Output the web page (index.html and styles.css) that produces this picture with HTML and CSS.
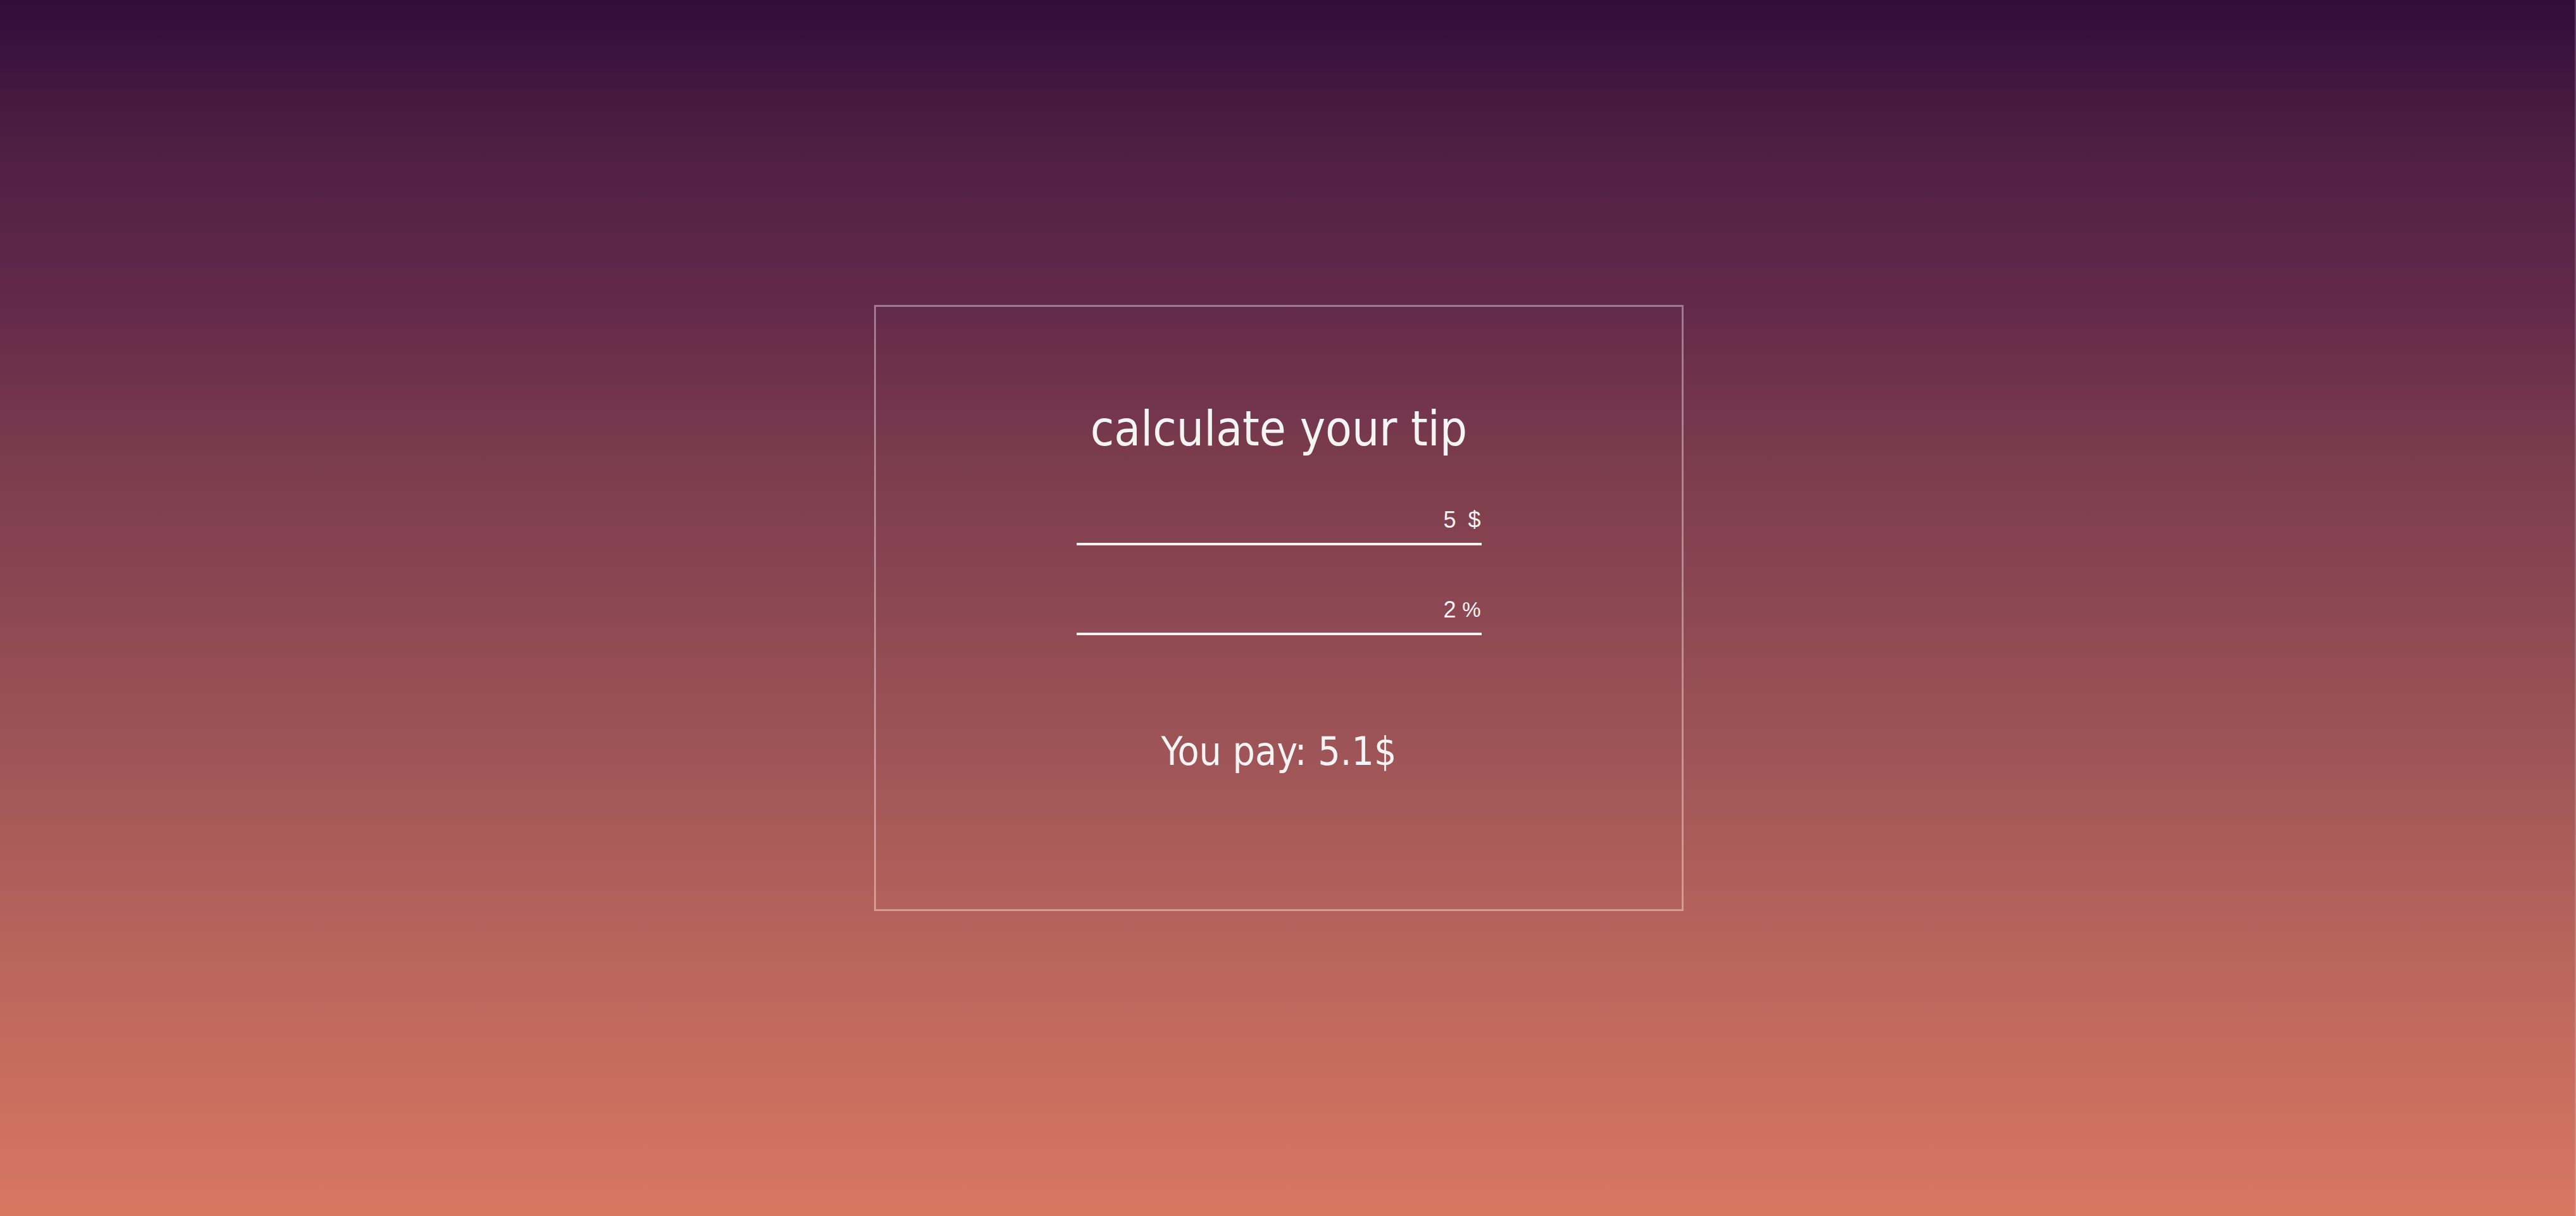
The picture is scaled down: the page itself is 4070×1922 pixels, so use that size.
FILE: index.html
```html
<!DOCTYPE html>
<html lang="en">
<head>
<meta charset="utf-8">
<title>Tip calculator</title>
<link rel="stylesheet" href="styles.css">
</head>
<body>
<main class="page">
  <section class="card">
    <h1 class="title">calculate your tip</h1>
    <div class="field">
      <span class="value">5</span>
      <span class="unit">$</span>
    </div>
    <div class="field field-second">
      <span class="value">2</span>
      <span class="unit unit-percent">%</span>
    </div>
    <p class="result">You pay: 5.1$</p>
  </section>
</main>
</body>
</html>
```
FILE: styles.css
```css
html, body {
  margin: 0;
  padding: 0;
  height: 100%;
}

body {
  background: linear-gradient(180deg,
    #320c3b 0%,
    #4e1f42 12%,
    #63294a 25%,
    #7b3c4d 38%,
    #8c4852 50%,
    #a35858 65%,
    #bb665c 80%,
    #d87762 100%);
  color: #f4f4f4;
  overflow: hidden;
}

.page {
  box-sizing: border-box;
  height: 1922px;
  display: flex;
  align-items: center;
  justify-content: center;
  padding-right: 27px;
  border-right: 2px solid rgba(255, 255, 255, 0.18);
}

.card {
  box-sizing: border-box;
  width: 1279px;
  height: 958px;
  border: 3px solid rgba(255, 255, 255, 0.38);
  padding-top: 149px;
  display: flex;
  flex-direction: column;
  align-items: center;
}

.title {
  margin: 0;
  font-family: "DejaVu Sans Condensed", "DejaVu Sans", sans-serif;
  font-stretch: condensed;
  font-weight: normal;
  font-size: 76px;
  line-height: 88px;
}

.field {
  box-sizing: border-box;
  width: 640px;
  margin-top: 80px;
  display: flex;
  justify-content: flex-end;
  gap: 7px;
  padding: 0 1px 16px 0;
  border-bottom: 4px solid #f4f4f4;
  font-family: "Liberation Sans", Arial, sans-serif;
  font-size: 36px;
  line-height: 40px;
}

.unit {
  width: 32px;
  text-align: right;
}

.unit-percent {
  font-size: 33px;
}

.field-second {
  margin-top: 82px;
}

.result {
  margin: 148px 0 0;
  font-family: "DejaVu Sans Condensed", "DejaVu Sans", sans-serif;
  font-stretch: condensed;
  font-size: 62px;
  line-height: 72px;
}
```
